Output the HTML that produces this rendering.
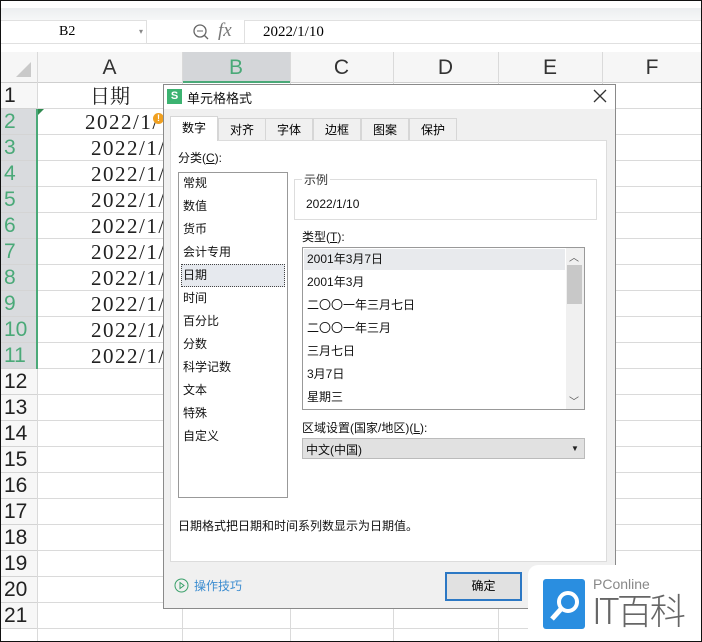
<!DOCTYPE html>
<html><head><meta charset="utf-8"><style>
*{margin:0;padding:0;box-sizing:border-box}
body{width:702px;height:642px;overflow:hidden;background:#fff;font-family:"Liberation Sans","Noto Sans CJK SC",sans-serif;position:relative}
.a{position:absolute}
.rh{position:absolute;left:0;width:37px;height:26px;font-size:21px;color:#222;padding-left:4px;line-height:26px;border-bottom:1px solid #d4d4d4;background:#f7f7f7}
.rh.s{background:#d9dbde;color:#4aa978}
.hl{position:absolute;left:37px;right:0;height:1px;background:#dadada}
.vl{position:absolute;top:52px;bottom:0;width:1px;background:#dadada}
.ch{position:absolute;top:52px;height:31px;font-size:21px;color:#333;text-align:center;line-height:32px}
.cell{position:absolute;left:91px;white-space:nowrap;font-family:"Liberation Serif","Noto Serif CJK SC",serif;font-size:21px;letter-spacing:1.5px;color:#222;line-height:26px}
.dl{font-size:12px;color:#111}
.tab{position:absolute;top:118px;height:22px;width:48px;border:1px solid #d6d6d6;border-bottom:none;background:#f0f0f0;font-size:12px;text-align:center;line-height:22px}
.it{position:absolute;font-size:12px;color:#111;line-height:23px}
</style></head><body>
<div class="a" style="left:0;top:0;width:702px;height:8px;background:#fff"></div>
<div class="a" style="left:0;top:8px;width:702px;height:12px;background:linear-gradient(#eceef0,#f6f7f8)"></div>
<div class="a" style="left:0;top:20px;width:702px;height:24px;background:#fff"></div>
<div class="a" style="left:0;top:43px;width:702px;height:1px;background:#dcdcdc"></div>
<div class="a" style="left:0;top:20px;width:147px;height:24px;border:1px solid #e0e0e0;font-size:14px;font-family:'Liberation Serif',serif;padding-left:58px;line-height:22px">B2<span style="position:absolute;left:138px;font-size:8px;color:#888">▾</span></div>
<svg class="a" style="left:192px;top:23px" width="18" height="18"><circle cx="8" cy="8" r="6" fill="none" stroke="#666" stroke-width="1.3"/><line x1="12.5" y1="12.5" x2="16" y2="16" stroke="#666" stroke-width="1.3"/><line x1="5" y1="8" x2="11" y2="8" stroke="#666"/></svg>
<div class="a" style="left:218px;top:20px;font-family:'Liberation Serif',serif;font-style:italic;font-size:19px;color:#777">fx</div>
<div class="a" style="left:244px;top:20px;width:460px;height:24px;border:1px solid #e0e0e0;font-family:'Liberation Serif',serif;font-size:15px;padding-left:18px;line-height:22px">2022/1/10</div>
<div class="a" style="left:0;top:44px;width:702px;height:8px;background:#fff"></div>
<div class="a" style="left:0;top:52px;width:702px;height:31px;background:#f6f6f6;border-bottom:1px solid #cfcfcf"></div>
<div class="a" style="left:182px;top:52px;width:108px;height:31px;background:#d4d6d9;border-bottom:2px solid #4aa978"></div>
<svg class="a" style="left:14px;top:60px" width="18" height="18"><polygon points="17,2 17,17 2,17" fill="#c9c9c9"/></svg>
<div class="ch" style="left:37px;width:145px">A</div>
<div class="ch" style="left:182px;width:108px;color:#4aa978">B</div>
<div class="ch" style="left:290px;width:103px">C</div>
<div class="ch" style="left:393px;width:105px">D</div>
<div class="ch" style="left:498px;width:104px">E</div>
<div class="ch" style="left:602px;width:100px">F</div>
<div class="vl" style="left:37px"></div><div class="vl" style="left:182px"></div><div class="vl" style="left:290px"></div><div class="vl" style="left:393px"></div><div class="vl" style="left:498px"></div><div class="vl" style="left:602px"></div>
<div class="rh" style="top:83px">1</div><div class="hl" style="top:108px"></div>
<div class="rh s" style="top:109px">2</div><div class="hl" style="top:134px"></div>
<div class="rh s" style="top:135px">3</div><div class="hl" style="top:160px"></div>
<div class="rh s" style="top:161px">4</div><div class="hl" style="top:186px"></div>
<div class="rh s" style="top:187px">5</div><div class="hl" style="top:212px"></div>
<div class="rh s" style="top:213px">6</div><div class="hl" style="top:238px"></div>
<div class="rh s" style="top:239px">7</div><div class="hl" style="top:264px"></div>
<div class="rh s" style="top:265px">8</div><div class="hl" style="top:290px"></div>
<div class="rh s" style="top:291px">9</div><div class="hl" style="top:316px"></div>
<div class="rh s" style="top:317px">10</div><div class="hl" style="top:342px"></div>
<div class="rh s" style="top:343px">11</div><div class="hl" style="top:368px"></div>
<div class="rh" style="top:369px">12</div><div class="hl" style="top:394px"></div>
<div class="rh" style="top:395px">13</div><div class="hl" style="top:420px"></div>
<div class="rh" style="top:421px">14</div><div class="hl" style="top:446px"></div>
<div class="rh" style="top:447px">15</div><div class="hl" style="top:472px"></div>
<div class="rh" style="top:473px">16</div><div class="hl" style="top:498px"></div>
<div class="rh" style="top:499px">17</div><div class="hl" style="top:524px"></div>
<div class="rh" style="top:525px">18</div><div class="hl" style="top:550px"></div>
<div class="rh" style="top:551px">19</div><div class="hl" style="top:576px"></div>
<div class="rh" style="top:577px">20</div><div class="hl" style="top:602px"></div>
<div class="rh" style="top:603px">21</div><div class="hl" style="top:628px"></div>
<div class="a" style="left:36px;top:109px;width:2px;height:260px;background:#4aa978"></div>
<div class="a" style="left:38px;top:109px;width:0;height:0;border-top:6px solid #2f8a4f;border-right:6px solid transparent"></div>
<div class="a" style="left:90px;top:84px;font-family:'Liberation Serif','Noto Serif CJK SC',serif;font-size:20px;line-height:26px;color:#222">日期</div>
<div class="cell" style="top:109px;left:85px">2022/1/</div>
<div class="cell" style="top:135px">2022/1/</div><div class="cell" style="top:161px">2022/1/</div><div class="cell" style="top:187px">2022/1/</div><div class="cell" style="top:213px">2022/1/</div><div class="cell" style="top:239px">2022/1/</div><div class="cell" style="top:265px">2022/1/</div><div class="cell" style="top:291px">2022/1/</div><div class="cell" style="top:317px">2022/1/</div><div class="cell" style="top:343px">2022/1/</div>
<div class="a" style="left:153px;top:113px;width:11px;height:11px;border-radius:50%;background:#f0a020;color:#fff;font-size:9px;text-align:center;line-height:11px;font-weight:bold">!</div>
<div class="a" style="left:163px;top:84px;width:453px;height:525px;background:#f0f0f0;border:1px solid #8a8a8a"></div>
<div class="a" style="left:164px;top:85px;width:451px;height:24px;background:#fff"></div>
<div class="a" style="left:167px;top:89px;width:15px;height:15px;background:#3cb371;color:#fff;font-size:11px;text-align:center;line-height:15px;font-weight:bold">S</div>
<div class="a dl" style="left:187px;top:88px;font-size:13px">单元格格式</div>
<svg class="a" style="left:593px;top:89px" width="14" height="14"><path d="M1 1L13 13M13 1L1 13" stroke="#333" stroke-width="1.3"/></svg>
<div class="a" style="left:170px;top:140px;width:437px;height:422px;background:#fff;border:1px solid #dcdcdc"></div>
<div class="tab" style="left:170px;top:116px;height:25px;background:#fff;z-index:2">数字</div>
<div class="tab" style="left:218px">对齐</div><div class="tab" style="left:265px">字体</div><div class="tab" style="left:313px">边框</div><div class="tab" style="left:361px">图案</div><div class="tab" style="left:409px">保护</div>
<div class="a dl" style="left:178px;top:149px">分类(<u>C</u>):</div>
<div class="a" style="left:178px;top:172px;width:110px;height:326px;border:1px solid #999;background:#fff"></div>
<div class="a" style="left:181px;top:264px;width:104px;height:23px;background:#e6e9ee;border:1px dotted #444"></div>
<div class="it" style="left:183px;top:172px">常规</div><div class="it" style="left:183px;top:195px">数值</div><div class="it" style="left:183px;top:218px">货币</div><div class="it" style="left:183px;top:241px">会计专用</div><div class="it" style="left:183px;top:264px">日期</div><div class="it" style="left:183px;top:287px">时间</div><div class="it" style="left:183px;top:310px">百分比</div><div class="it" style="left:183px;top:333px">分数</div><div class="it" style="left:183px;top:356px">科学记数</div><div class="it" style="left:183px;top:379px">文本</div><div class="it" style="left:183px;top:402px">特殊</div><div class="it" style="left:183px;top:425px">自定义</div>
<div class="a" style="left:294px;top:179px;width:303px;height:41px;border:1px solid #ddd"></div>
<div class="a dl" style="left:302px;top:171px;background:#fff;padding:0 2px;color:#333">示例</div>
<div class="a dl" style="left:306px;top:197px">2022/1/10</div>
<div class="a dl" style="left:302px;top:228px">类型(<u>T</u>):</div>
<div class="a" style="left:302px;top:247px;width:283px;height:163px;border:1px solid #999;background:#fff"></div>
<div class="a" style="left:304px;top:249px;width:261px;height:21px;background:#e8eaed"></div>
<div class="a" style="left:566px;top:248px;width:18px;height:161px;background:#f0f0f0"></div>
<div class="a" style="left:567px;top:265px;width:15px;height:39px;background:#c8c8c8"></div>
<div class="a" style="left:569px;top:249px;font-size:10px;color:#555">︿</div>
<div class="a" style="left:569px;top:393px;font-size:10px;color:#555">﹀</div>
<div class="it" style="left:307px;top:248px">2001年3月7日</div><div class="it" style="left:307px;top:271px">2001年3月</div><div class="it" style="left:307px;top:294px">二〇〇一年三月七日</div><div class="it" style="left:307px;top:317px">二〇〇一年三月</div><div class="it" style="left:307px;top:340px">三月七日</div><div class="it" style="left:307px;top:363px">3月7日</div><div class="it" style="left:307px;top:386px">星期三</div>
<div class="a dl" style="left:302px;top:419px">区域设置(国家/地区)(<u>L</u>):</div>
<div class="a" style="left:302px;top:438px;width:283px;height:21px;background:#e1e1e1;border:1px solid #bbb"></div>
<div class="a dl" style="left:306px;top:441px">中文(中国)</div>
<div class="a" style="left:571px;top:444px;font-size:8px;color:#222">▼</div>
<div class="a dl" style="left:178px;top:517px">日期格式把日期和时间系列数显示为日期值。</div>
<svg class="a" style="left:174px;top:578px" width="15" height="15"><circle cx="7.5" cy="7.5" r="6.5" fill="none" stroke="#3aa06a"/><path d="M6 4.5L10 7.5L6 10.5Z" fill="none" stroke="#3aa06a"/></svg>
<div class="a dl" style="left:194px;top:577px;color:#3b8cd0">操作技巧</div>
<div class="a" style="left:445px;top:572px;width:77px;height:29px;background:#e1e1e1;border:2px solid #2c78c4;font-size:12px;text-align:center;line-height:25px">确定</div>
<div class="a" style="left:528px;top:565px;width:174px;height:76px;background:#fff;border-top-left-radius:10px"></div>
<div class="a" style="left:543px;top:579px;width:42px;height:50px;background:#2a8ee0;border-radius:3px"></div>
<svg class="a" style="left:543px;top:579px" width="42" height="50"><circle cx="25" cy="23" r="9" fill="#2a8ee0" stroke="#fff" stroke-width="4"/><line x1="18" y1="30" x2="9" y2="40" stroke="#fff" stroke-width="5"/></svg>
<div class="a" style="left:593px;top:576px;font-size:14px;color:#888">PConline</div>
<div class="a" style="left:592px;top:589px;font-family:'Noto Sans CJK SC',sans-serif;font-weight:300;font-size:36px;letter-spacing:-3px;color:#666;line-height:40px">IT百科</div>
<div class="a" style="left:0;top:0;width:702px;height:642px;border:1px solid #111"></div>
</body></html>
